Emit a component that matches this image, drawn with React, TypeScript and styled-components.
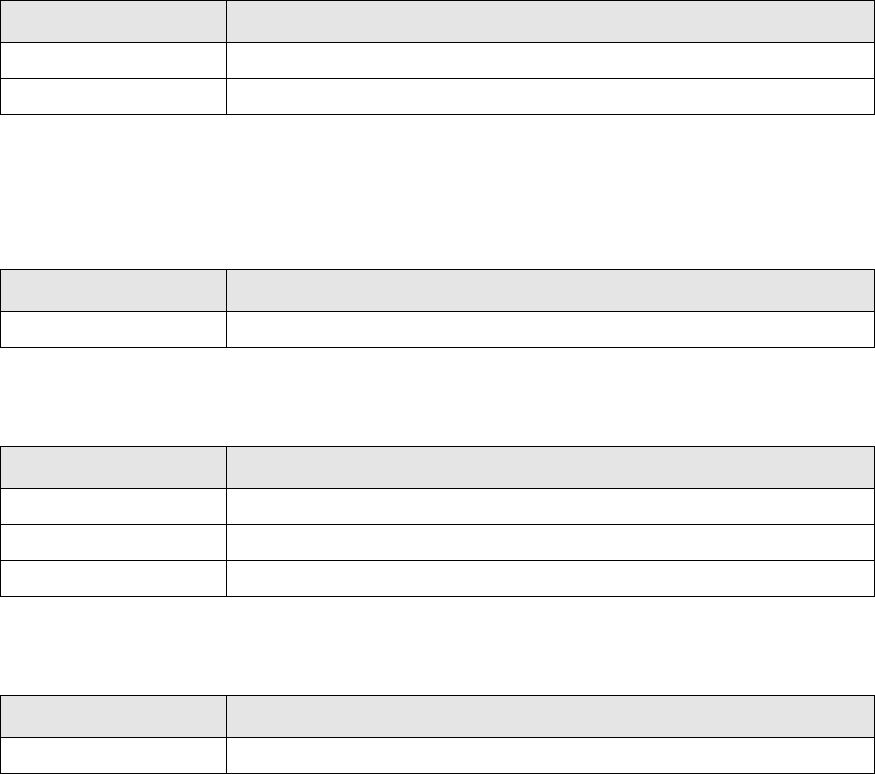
import React from "react";
import styled, { createGlobalStyle } from "styled-components";

const GlobalStyle = createGlobalStyle`
  html, body {
    margin: 0;
    padding: 0;
    background: #ffffff;
    font-family: "Liberation Sans", Arial, sans-serif;
    font-size: 14px;
  }
`;

const Page = styled.div`
  display: flex;
  flex-direction: column;
  width: 875px;
`;

const Table = styled.div<{ $gap: number }>`
  margin-top: ${(p) => p.$gap}px;
  border: 1px solid #000;
  border-bottom: 0;
  display: flex;
  flex-direction: column;
`;

const Row = styled.div<{ $head?: boolean }>`
  display: grid;
  grid-template-columns: 226px 1fr;
  height: ${(p) => (p.$head ? 41 : 35)}px;
  border-bottom: 1px solid #000;
  background: ${(p) => (p.$head ? "#e5e5e5" : "#ffffff")};
`;

const Cell = styled.div`
  padding: 0 8px;
  display: flex;
  align-items: center;
  color: #000;
  &:first-child {
    border-right: 1px solid #000;
  }
`;

const tables = [
  { gap: 0, rows: 2 },
  { gap: 154, rows: 1 },
  { gap: 98, rows: 3 },
  { gap: 98, rows: 1 },
];

const App: React.FC = () => {
  return (
    <Page>
      <GlobalStyle />
      {tables.map((t, i) => (
        <Table key={i} $gap={t.gap}>
          <Row $head>
            <Cell />
            <Cell />
          </Row>
          {Array.from({ length: t.rows }).map((_, j) => (
            <Row key={j}>
              <Cell />
              <Cell />
            </Row>
          ))}
        </Table>
      ))}
    </Page>
  );
};

export default App;
